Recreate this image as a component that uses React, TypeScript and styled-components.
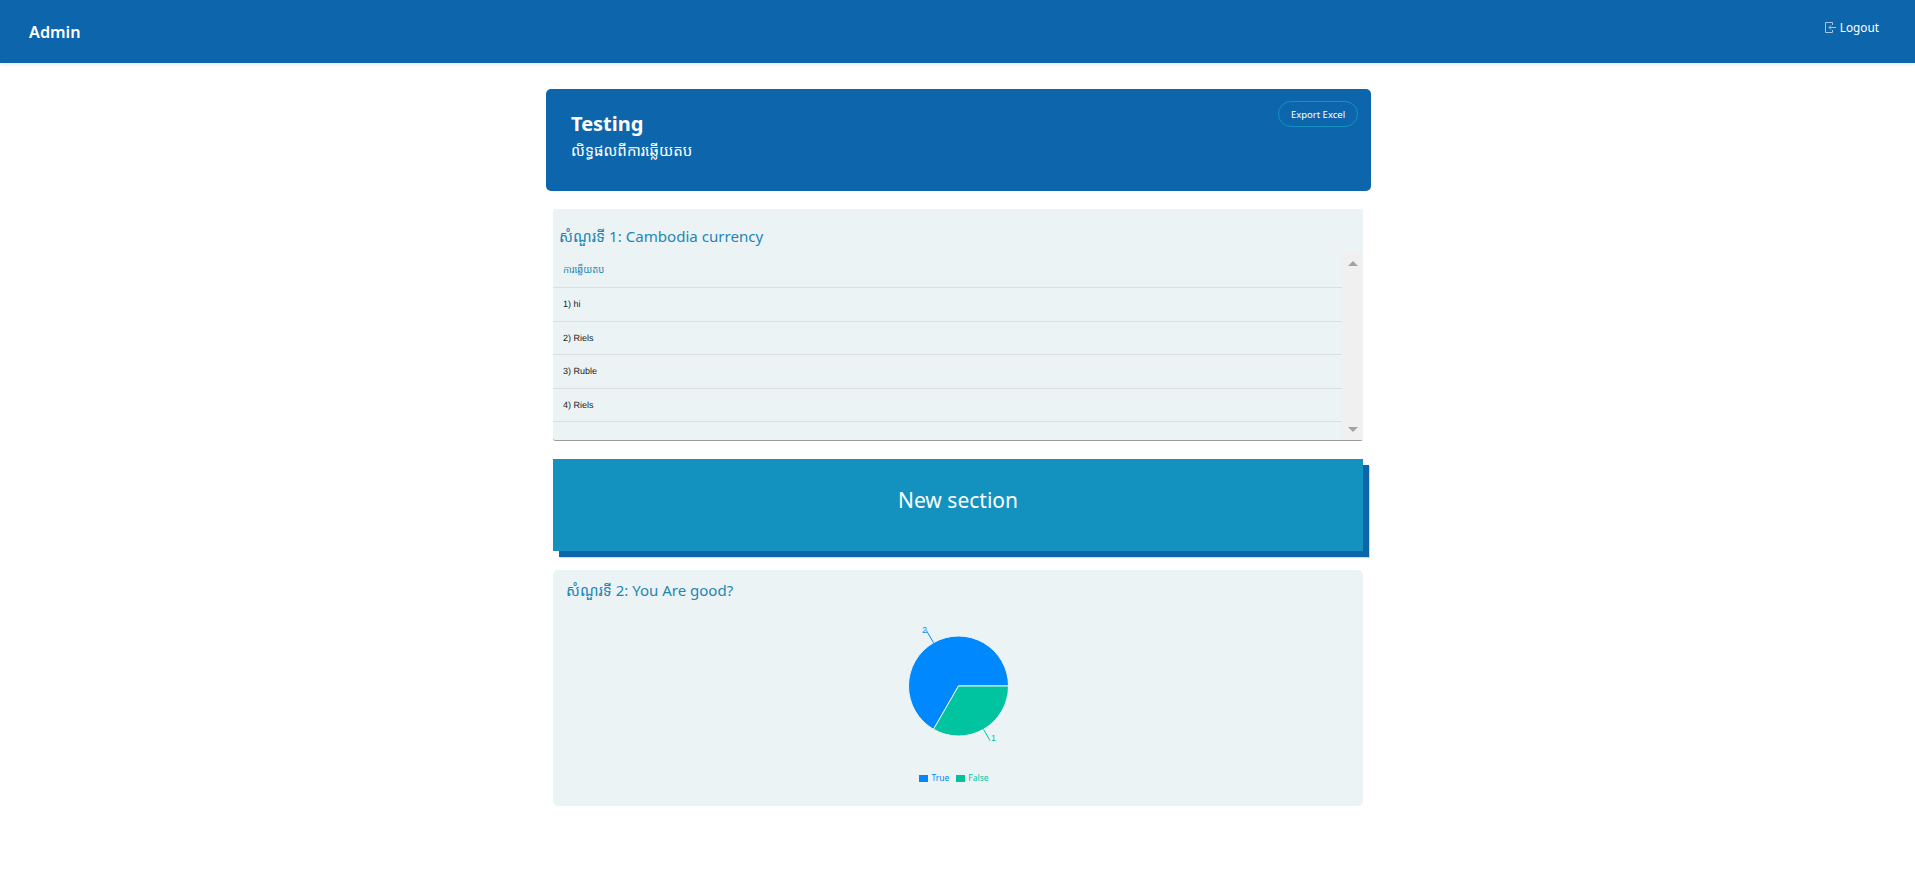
import { createGlobalStyle, styled } from 'styled-components'

const BLUE = '#0d66ac'
const TEAL = '#1392bf'
const CARD = '#ecf3f5'
const KHMER = '"Noto Sans", "Noto Sans Khmer", "Khmer OS", "DejaVu Sans", sans-serif'

const GlobalStyle = createGlobalStyle`
  html, body {
    margin: 0;
    padding: 0;
    background: #fff;
  }
  body {
    font-family: ${KHMER};
    overflow: hidden;
  }
  * {
    box-sizing: border-box;
  }
`

const answers = ['1) hi', '2) Riels', '3) Ruble', '4) Riels']

const pieCenter = { x: 100.5, y: 85 }
const pieRadius = 50

const polar = (deg: number, r: number = pieRadius) => {
  const rad = (deg * Math.PI) / 180
  return `${pieCenter.x + r * Math.cos(rad)} ${pieCenter.y - r * Math.sin(rad)}`
}

const LogoutIcon = () => (
  <svg width="11" height="11" viewBox="0 0 11 11" fill="none" stroke="#a9c6de" strokeWidth="1">
    <path d="M7.5 3V.5h-7v10h7V8" />
    <path d="M11 5.5H4M6 3.5l-2 2 2 2" />
  </svg>
)

const PieChart = () => (
  <svg width="200" height="180" viewBox="0 0 200 180">
    <path
      d={`M${pieCenter.x} ${pieCenter.y} L${polar(0)} A${pieRadius} ${pieRadius} 0 1 0 ${polar(240)} Z`}
      fill="#0088fe"
      stroke="#ecf3f5"
    />
    <path
      d={`M${pieCenter.x} ${pieCenter.y} L${polar(240)} A${pieRadius} ${pieRadius} 0 0 0 ${polar(0)} Z`}
      fill="#00c49f"
      stroke="#ecf3f5"
    />
    <path d={`M${polar(120)} L${polar(120, 64)}`} stroke="#0088fe" fill="none" />
    <path d={`M${polar(300)} L${polar(300, 63)}`} stroke="#00c49f" fill="none" />
    <ChartLabel x="64" y="32" fill="#0088fe">2</ChartLabel>
    <ChartLabel x="133" y="140" fill="#00c49f">1</ChartLabel>
  </svg>
)

export default function App() {
  return (
    <>
      <GlobalStyle />
      <TopBar>
        <Brand>Admin</Brand>
        <LogoutLink>
          <LogoutIcon />
          Logout
        </LogoutLink>
      </TopBar>
      <Main>
        <Column>
          <Banner>
            <BannerTitle>Testing</BannerTitle>
            <BannerSub>លិទ្ធផលពីការឆ្លើយតប</BannerSub>
            <ExportButton>Export Excel</ExportButton>
          </Banner>

          <TableCard>
            <TableTitle>សំណួរទី 1: Cambodia currency</TableTitle>
            <TableWrap>
              <TableBody>
                <HeadRow>ការឆ្លើយតប</HeadRow>
                {answers.map((a) => (
                  <AnswerRow key={a}>{a}</AnswerRow>
                ))}
              </TableBody>
              <ScrollTrack>
                <ArrowUp />
                <ArrowDown />
              </ScrollTrack>
            </TableWrap>
          </TableCard>

          <SectionBar>New section</SectionBar>

          <ChartCard>
            <ChartTitle>សំណួរទី 2: You Are good?</ChartTitle>
            <ChartArea>
              <PieChart />
              <Legend>
                <LegendItem $color="#0088fe">True</LegendItem>
                <LegendItem $color="#00c49f">False</LegendItem>
              </Legend>
            </ChartArea>
          </ChartCard>
        </Column>
      </Main>
    </>
  )
}

const TopBar = styled.header`
  height: 63px;
  background: ${BLUE};
  box-shadow: 0 1px 4px rgba(0, 0, 0, 0.12);
  display: flex;
  justify-content: space-between;
  padding: 0 36px 0 29px;
  color: #fff;
`

const Brand = styled.div`
  font-size: 16.2px;
  font-weight: 600;
  line-height: 64px;
`

const LogoutLink = styled.div`
  display: flex;
  align-items: center;
  gap: 4px;
  height: 54px;
  font-size: 11.8px;
`

const Main = styled.main`
  display: flex;
  justify-content: center;
  padding: 26px 0 0 2px;
`

const Column = styled.div`
  width: 825px;
`

const Banner = styled.section`
  position: relative;
  height: 102px;
  background: ${BLUE};
  border-radius: 5px;
  color: #fff;
  padding: 21px 25px;
`

const BannerTitle = styled.h1`
  margin: 0;
  font-size: 20px;
  font-weight: 700;
  line-height: 27px;
`

const BannerSub = styled.div`
  font-size: 15px;
  line-height: 24px;
  font-weight: 400;
  padding-top: 1px;
`

const ExportButton = styled.button`
  position: absolute;
  top: 12px;
  right: 13px;
  width: 80px;
  height: 26px;
  border-radius: 13px;
  border: 1px solid ${TEAL};
  background: transparent;
  color: #fff;
  font-family: ${KHMER};
  font-size: 9.5px;
  padding: 0;
`

const TableCard = styled.section`
  margin: 18px 8px 0 7px;
  height: 232px;
  background: ${CARD};
  border-radius: 2px;
  display: flex;
  flex-direction: column;
`

const TableTitle = styled.h2`
  margin: 0;
  height: 43px;
  padding: 16px 0 0 6px;
  font-size: 15.1px;
  font-weight: 400;
  line-height: 22px;
  color: #1e87b4;
`

const TableWrap = styled.div`
  flex: 1;
  display: flex;
  min-height: 0;
  border-bottom: 1px solid #999;
  border-radius: 0 0 3px 3px;
`

const TableBody = styled.div`
  flex: 1;
`

const Row = styled.div`
  height: 33.5px;
  padding-left: 10px;
  display: flex;
  align-items: center;
  border-bottom: 1px solid #dcdfe2;
`

const HeadRow = styled(Row)`
  height: 36px;
  font-size: 9.5px;
  color: #1e87b4;
`

const AnswerRow = styled(Row)`
  font-family: 'Liberation Sans', Arial, sans-serif;
  font-size: 9px;
  text-rendering: geometricPrecision;
  color: #222;
`

const ScrollTrack = styled.div`
  width: 21px;
  background: #f0f0f0;
  display: flex;
  flex-direction: column;
  align-items: center;
  justify-content: space-between;
  padding: 9px 0 8px;
`

const ArrowUp = styled.span`
  width: 0;
  height: 0;
  border-left: 5px solid transparent;
  border-right: 5px solid transparent;
  border-bottom: 5px solid #a3a3a3;
`

const ArrowDown = styled.span`
  width: 0;
  height: 0;
  border-left: 5px solid transparent;
  border-right: 5px solid transparent;
  border-top: 5px solid #a3a3a3;
`

const SectionBar = styled.section`
  margin: 18px 8px 0 7px;
  height: 92px;
  padding-bottom: 10px;
  background: ${TEAL};
  box-shadow: 6px 6px 0 ${BLUE}, 7px 7px 0 #c9dcea;
  color: #fff;
  font-size: 21px;
  display: flex;
  align-items: center;
  justify-content: center;
`

const ChartCard = styled.section`
  margin: 19px 8px 0 7px;
  height: 236px;
  background: ${CARD};
  border-radius: 5px;
`

const ChartTitle = styled.h2`
  margin: 0;
  padding: 9px 0 0 13px;
  font-size: 15px;
  font-weight: 400;
  line-height: 22px;
  color: #1e87b4;
`

const ChartArea = styled.div`
  display: flex;
  flex-direction: column;
  align-items: center;
`

const ChartLabel = styled.text`
  font-family: 'Liberation Sans', Arial, sans-serif;
  font-size: 9px;
`

const Legend = styled.div`
  display: flex;
  gap: 7px;
  margin: -9px 8px 0 0;
  font-size: 8.5px;
  line-height: 12px;
`

const LegendItem = styled.span<{ $color: string }>`
  display: flex;
  align-items: center;
  gap: 3px;
  color: ${(p) => p.$color};
  &::before {
    content: '';
    width: 9px;
    height: 7px;
    background: ${(p) => p.$color};
  }
`
